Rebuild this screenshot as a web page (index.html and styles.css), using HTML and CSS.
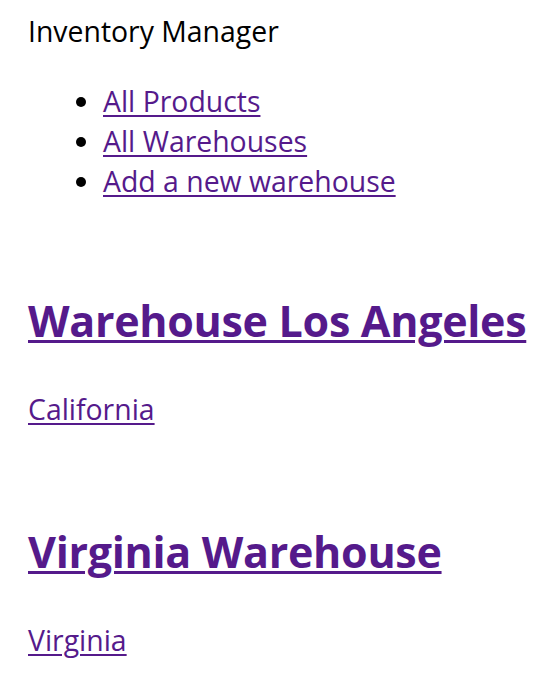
FILE: index.html
```html
<!DOCTYPE html>
<html>
<head>
<meta charset="utf-8">
<link rel="stylesheet" href="styles.css">
</head>
<body>
<div class="page">
  <div class="brand">Inventory Manager</div>
  <ul class="nav">
    <li><a href="#">All Products</a></li>
    <li><a href="#">All Warehouses</a></li>
    <li><a href="#">Add a new warehouse</a></li>
  </ul>
  <div class="warehouse">
    <h1 class="title"><a href="#">Warehouse Los Angeles</a></h1>
    <p class="state"><a href="#">California</a></p>
  </div>
  <div class="warehouse">
    <h1 class="title"><a href="#">Virginia Warehouse</a></h1>
    <p class="state"><a href="#">Virginia</a></p>
  </div>
</div>
</body>
</html>
```
FILE: styles.css
```css
html, body {
  margin: 0;
  padding: 0;
  background: #fff;
}
.page {
  font-family: "Open Sans", "Noto Sans", sans-serif;
  font-size: 28.4px;
  line-height: 40px;
  color: #000;
  padding: 11px 28px 0;
}
a {
  color: #551a8b;
  text-decoration: underline;
  text-underline-offset: 3px;
  text-decoration-thickness: 2px;
}
.brand {
  margin: 0;
}
.nav {
  margin: 30px 0 0;
  padding-left: 75px;
}
.nav li {
  line-height: 40px;
}
.warehouse {
  margin-top: 90px;
}
.warehouse + .warehouse {
  margin-top: 93px;
}
.title {
  font-size: 43px;
  line-height: 60px;
  font-weight: 700;
  letter-spacing: -0.3px;
  margin: 0;
  white-space: nowrap;
}
.title a {
  text-decoration-thickness: 3px;
}
.state {
  margin: 38px 0 0;
}
```
